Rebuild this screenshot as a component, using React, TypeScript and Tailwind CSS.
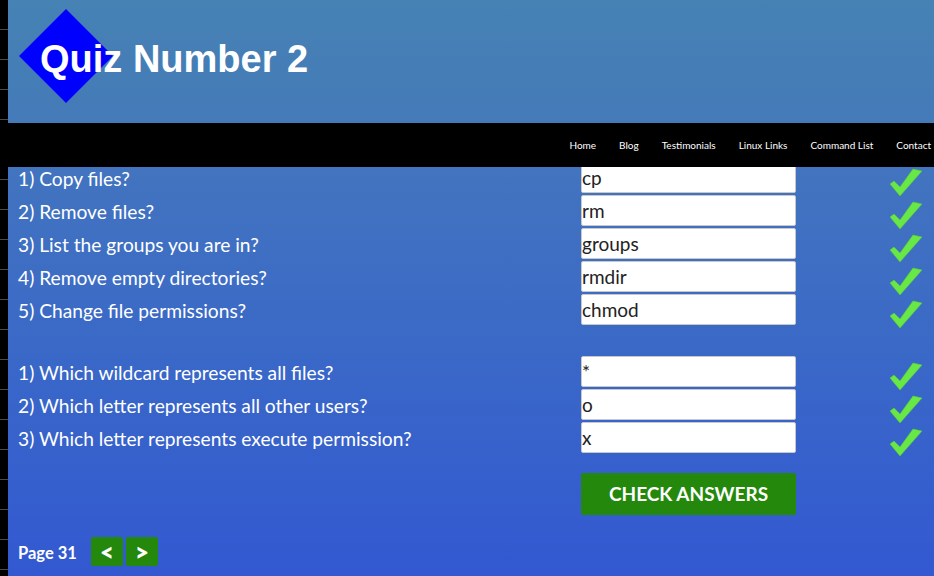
import React from 'react'

// ---------------------------------------------------------------------------
// Data
// ---------------------------------------------------------------------------

const GROUP_ONE = [
  { q: '1) Copy files?', a: 'cp' },
  { q: '2) Remove files?', a: 'rm' },
  { q: '3) List the groups you are in?', a: 'groups' },
  { q: '4) Remove empty directories?', a: 'rmdir' },
  { q: '5) Change file permissions?', a: 'chmod' },
]

const GROUP_TWO = [
  { q: '1) Which wildcard represents all files?', a: '*' },
  { q: '2) Which letter represents all other users?', a: 'o' },
  { q: '3) Which letter represents execute permission?', a: 'x' },
]

const NAV = ['Home', 'Blog', 'Testimonials', 'Linux Links', 'Command List', 'Contact']

// ---------------------------------------------------------------------------
// Pieces
// ---------------------------------------------------------------------------

function Tick() {
  return (
    <svg width="32" height="28" viewBox="0 0 32 28" className="shrink-0 -mb-[3px]">
      <polygon
        points="0,16 4,13 10,19 23,1 32,3 10,28"
        fill="#67e846"
        stroke="#5cc840"
        strokeWidth="0.6"
        strokeLinejoin="round"
      />
    </svg>
  )
}

function QuestionRow({ q, a }: { q: string; a: string }) {
  return (
    <div className="flex h-[31px] mb-[2px]">
      <div className="w-[563px] pt-[6px] text-[19.2px] leading-[22px] text-white">{q}</div>
      <input
        readOnly
        value={a}
        className="w-[215px] h-[31px] rounded-[2px] border border-[#c8c8c8] bg-white pl-0 text-[19px] text-[#222] outline-none"
      />
      <div className="ml-[94px] self-end">
        <Tick />
      </div>
    </div>
  )
}

function Strip({ lines }: { lines: string }) {
  return <div className={`w-[8px] shrink-0 ${lines}`} />
}

// ---------------------------------------------------------------------------
// Page
// ---------------------------------------------------------------------------

export default function App() {
  return (
    <div className="w-[934px] h-[576px] overflow-hidden bg-black font-['Lato',sans-serif]">
      {/* Header */}
      <div className="flex h-[123px]">
        <Strip lines="bg-[repeating-linear-gradient(to_bottom,#000_0px,#000_29px,#4a4a4a_29px,#4a4a4a_30px)]" />
        <div className="relative flex-1 bg-linear-to-b from-[#4682b4] to-[#447ab8]">
          <svg width="94" height="94" viewBox="0 0 94 94" className="absolute left-[11px] top-[9px]">
            <polygon points="47,0 94,47 47,94 0,47" fill="#0000ff" />
          </svg>
          <h1 className="relative pl-[32px] pt-[40px] text-[38px] leading-none font-bold text-white font-['Liberation_Sans',Arial,sans-serif]">
            Quiz Number 2
          </h1>
        </div>
      </div>

      {/* Nav */}
      <nav className="flex h-[44px] items-center justify-end gap-[23px] bg-black pr-[3px]">
        {NAV.map((n) => (
          <a key={n} className="text-[10px] text-white">
            {n}
          </a>
        ))}
      </nav>

      {/* Content */}
      <div className="flex h-[409px]">
        <Strip lines="bg-[repeating-linear-gradient(to_bottom,#000_0px,#000_12px,#4a4a4a_12px,#4a4a4a_13px,#000_13px,#000_30px)]" />
        <div className="flex-1 overflow-hidden bg-linear-to-b from-[#4274bf] to-[#3358d1]">
          <div className="-mt-[5px] pl-[10px]">
            {GROUP_ONE.map((r) => (
              <QuestionRow key={r.q} {...r} />
            ))}
            <div className="h-[29px]" />
            {GROUP_TWO.map((r) => (
              <QuestionRow key={r.q} {...r} />
            ))}

            <button className="ml-[563px] mt-[20px] flex h-[42px] w-[215px] items-center justify-center rounded-[2px] bg-[#23880b] text-[19px] font-bold text-white">
              CHECK ANSWERS
            </button>

            <div className="mt-[22px] flex h-[29px] items-center">
              <span className="w-[73px] pt-[3px] text-[16.5px] font-bold text-white">Page 31</span>
              <div className="flex gap-[3px]">
                <button className="flex h-[29px] w-[32px] items-center justify-center rounded-[2px] bg-[#23880b] text-[24px] leading-none font-extrabold text-white">
                  &lt;
                </button>
                <button className="flex h-[29px] w-[32px] items-center justify-center rounded-[2px] bg-[#23880b] text-[24px] leading-none font-extrabold text-white">
                  &gt;
                </button>
              </div>
            </div>
          </div>
        </div>
      </div>
    </div>
  )
}
